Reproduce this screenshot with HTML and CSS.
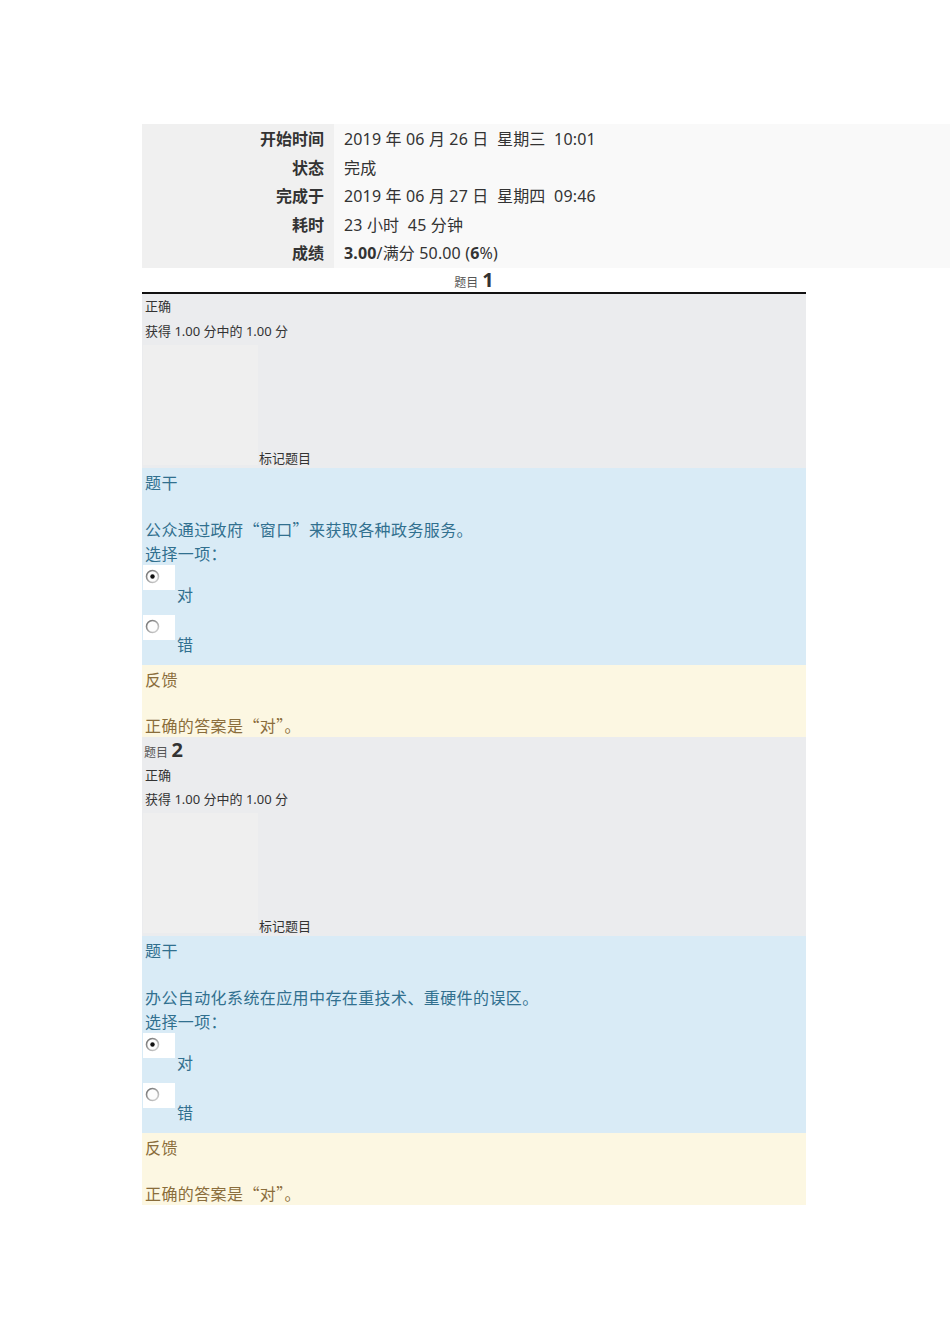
FILE: index.html
```html
<!DOCTYPE html>
<html lang="zh-CN">
<head>
<meta charset="utf-8">
<title>测验回顾</title>
<link rel="stylesheet" href="styles.css">
</head>
<body>
<div class="page">
  <div class="summary">
    <div class="row"><div class="label">开始时间</div><div class="value">2019 年 06 月 26 日&nbsp; 星期三&nbsp; 10:01</div></div>
    <div class="row"><div class="label">状态</div><div class="value">完成</div></div>
    <div class="row"><div class="label">完成于</div><div class="value">2019 年 06 月 27 日&nbsp; 星期四&nbsp; 09:46</div></div>
    <div class="row"><div class="label">耗时</div><div class="value">23 小时&nbsp; 45 分钟</div></div>
    <div class="row"><div class="label">成绩</div><div class="value"><b>3.00</b>/满分 50.00 (<b>6</b>%)</div></div>
  </div>

  <div class="qno centered"><span class="qword">题目</span> <span class="num">1</span></div>
  <div class="question first">
    <div class="info">
      <div class="state">正确</div>
      <div class="grade">获得 1.00 分中的 1.00 分</div>
      <div class="flagrow"><div class="flagbox"></div><div class="flag">标记题目</div></div>
    </div>
    <div class="content">
      <div class="line">题干</div>
      <div class="gap"></div>
      <div class="line">公众通过政府“窗口”来获取各种政务服务。</div>
      <div class="line">选择一项：</div>
      <div class="option">
        <div class="radio"><svg width="16" height="16" viewBox="0 0 16 16"><defs><linearGradient id="g1" x1="0" y1="0" x2="1" y2="1"><stop offset="0" stop-color="#6b6b6b"/><stop offset="1" stop-color="#d8d8d8"/></linearGradient></defs><circle cx="7.5" cy="7.5" r="6" fill="#fdfdfd" stroke="url(#g1)" stroke-width="1.6"/><circle cx="7.5" cy="7.5" r="2.2" fill="#111"/></svg></div>
        <div class="optlabel">对</div>
      </div>
      <div class="option">
        <div class="radio"><svg width="16" height="16" viewBox="0 0 16 16"><circle cx="7.5" cy="7.5" r="6" fill="#fdfdfd" stroke="url(#g1)" stroke-width="1.6"/></svg></div>
        <div class="optlabel">错</div>
      </div>
    </div>
    <div class="feedback">
      <div class="line">反馈</div>
      <div class="gap"></div>
      <div class="line last">正确的答案是“对”。</div>
    </div>
  </div>

  <div class="question">
    <div class="info">
      <div class="qno left"><span class="qword">题目</span> <span class="num">2</span></div>
      <div class="state s2">正确</div>
      <div class="grade">获得 1.00 分中的 1.00 分</div>
      <div class="flagrow"><div class="flagbox"></div><div class="flag">标记题目</div></div>
    </div>
    <div class="content">
      <div class="line">题干</div>
      <div class="gap"></div>
      <div class="line">办公自动化系统在应用中存在重技术、重硬件的误区。</div>
      <div class="line">选择一项：</div>
      <div class="option">
        <div class="radio"><svg width="16" height="16" viewBox="0 0 16 16"><circle cx="7.5" cy="7.5" r="6" fill="#fdfdfd" stroke="url(#g1)" stroke-width="1.6"/><circle cx="7.5" cy="7.5" r="2.2" fill="#111"/></svg></div>
        <div class="optlabel">对</div>
      </div>
      <div class="option">
        <div class="radio"><svg width="16" height="16" viewBox="0 0 16 16"><circle cx="7.5" cy="7.5" r="6" fill="#fdfdfd" stroke="url(#g1)" stroke-width="1.6"/></svg></div>
        <div class="optlabel">错</div>
      </div>
    </div>
    <div class="feedback">
      <div class="line">反馈</div>
      <div class="gap"></div>
      <div class="line last">正确的答案是“对”。</div>
    </div>
  </div>
</div>
</body>
</html>
```

FILE: styles.css
```css
html, body {
  margin: 0;
  padding: 0;
  background: #ffffff;
}

.page {
  padding: 124px 0 0 142px;
  font-family: "Noto Sans", "Open Sans", "Noto Sans CJK SC", sans-serif;
  color: #333333;
}

.summary {
  width: 808px;
  display: flex;
  flex-direction: column;
}

.row {
  display: grid;
  grid-template-columns: 192px 1fr;
  height: 28.6px;
  font-size: 16px;
  line-height: 30px;
}

.label {
  background: #f0f0f0;
  text-align: right;
  padding-right: 10px;
  font-weight: bold;
  border-bottom: 1px solid #f3f3f3;
}

.value {
  background: #f9f9f9;
  padding-left: 10px;
  border-bottom: 1px solid #f3f3f3;
  white-space: nowrap;
  letter-spacing: 0.15px;
}

.row:last-child .label,
.row:last-child .value {
  border-bottom: none;
}

.qno {
  width: 664px;
  color: #333333;
}

.qno.centered {
  height: 25px;
  line-height: 25px;
  text-align: center;
}

.qno.left {
  height: 26px;
  line-height: 26px;
  padding-left: 2px;
}

.qword {
  font-size: 12px;
  color: #555555;
}

.num {
  font-size: 20px;
  font-weight: bold;
  color: #333333;
}

.question {
  width: 664px;
}

.question.first {
  border-top: 2px solid #111111;
}

.info {
  background: #ebecee;
  font-size: 13px;
}

.state,
.grade {
  height: 25px;
  line-height: 25px;
  padding-left: 3px;
}

.state.s2 {
  height: 24px;
  line-height: 24px;
}

.flagrow {
  display: flex;
  align-items: flex-end;
  height: 124px;
}

.flagbox {
  width: 115px;
  height: 120px;
  margin: 1px 0 3px 1px;
  background: #efefef;
}

.flag {
  line-height: 20px;
  padding-left: 1px;
  color: #333333;
}

.content {
  background: #d9ebf6;
  color: #31708f;
  font-family: "Noto Sans CJK SC", "Noto Sans", serif;
  font-size: 16px;
  padding: 2px 0 0 3px;
  height: 195px;
}

.line {
  line-height: 24px;
  height: 24px;
  white-space: nowrap;
  letter-spacing: 0.4px;
}

.gap {
  height: 23px;
}

.option {
  display: flex;
  flex-direction: column;
}

.radio {
  width: 32px;
  height: 25px;
  background: #ffffff;
  margin-left: -2px;
  padding: 4px 0 0 2px;
  box-sizing: border-box;
}

.radio svg {
  display: block;
}

.optlabel {
  margin-left: 32px;
  line-height: 12px;
  height: 12px;
  margin-top: -2px;
  margin-bottom: 15px;
}

.feedback {
  background: #fcf7e2;
  color: #8a6d3b;
  font-family: "Noto Sans CJK SC", "Noto Sans", serif;
  font-size: 16px;
  padding: 2px 0 0 3px;
  height: 70px;
}

.feedback .line.last {
  height: 22px;
  line-height: 22px;
}
```
